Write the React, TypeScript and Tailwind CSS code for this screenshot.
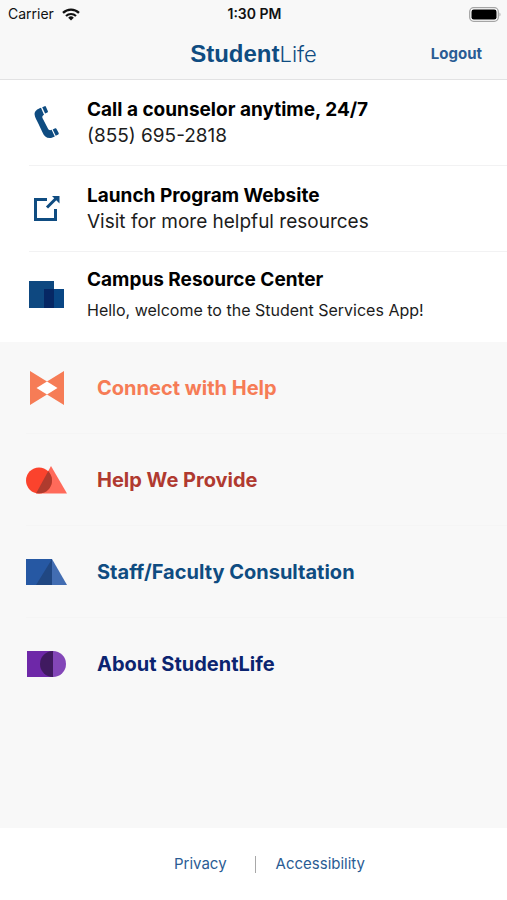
import type { ReactNode } from "react";

interface ResourceRowProps {
  title: string;
  detail: string;
  icon: ReactNode;
  detailClass: string;
}

interface MenuRowProps {
  label: string;
  icon: ReactNode;
  color: string;
}

const PhoneIcon = () => (
  <svg width="26" height="34" viewBox="0 0 26 34" fill="#0f4c81" aria-hidden="true">
    <path d="M7 1.800C3 3.200.4 5.200.6 8.500c.2 3 2.400 6 3.700 9l4 8.500c1.800 4 3.800 6 7.500 6 1.700 0 3.500-.8 5-1.600l-3.200-6.600c-1.700.8-2.900.3-3.700-1.200L8.600 12.300c-.7-1.600-.2-2.700 1.400-3.500z" />
    <path d="M8.200 1.300l2.500-1.100c.6-.2 1 0 1.200.5l2 4.600c.2.600 0 1-.5 1.200l-2.300 1.100z" />
    <path d="M18.700 23.400l2.500-1.100c.6-.2 1 0 1.200.5l2.300 4.300c.2.600.1 1-.4 1.300l-2.600 1.400z" />
  </svg>
);

const LaunchIcon = () => (
  <svg width="26" height="28" viewBox="0 0 26 28" fill="none" stroke="#0f4c81" aria-hidden="true">
    <path d="M13 4.500H1.500v20h20V14" strokeWidth="3" />
    <path d="M13 12.500L22.500 3" strokeWidth="3" />
    <path d="M18 1H25.500v7.500z" fill="#0f4c81" stroke="none" />
  </svg>
);

const CampusIcon = () => (
  <svg width="35" height="28" viewBox="0 0 35 28" aria-hidden="true">
    <path fill="#0e4880" d="M0 0h25v27H0z" />
    <path fill="#094684" d="M15 8h20v19H15z" />
    <path fill="#062764" d="M15 8h10v19H15z" />
  </svg>
);

const ConnectIcon = () => (
  <svg width="34" height="34" viewBox="0 0 34 34" aria-hidden="true">
    <path fill="#f67c56" d="M0 0l17 10.500L34 0v34L17 23.500 0 34z" />
    <path fill="#ffffff" d="M6.500 17L17 10.500 27.500 17 17 23.500z" />
  </svg>
);

const HelpIcon = () => (
  <svg width="41" height="28" viewBox="0 0 41 28" aria-hidden="true">
    <defs>
      <clipPath id="help-circle">
        <circle cx="13" cy="14.500" r="13" />
      </clipPath>
    </defs>
    <path fill="#ff6a5a" d="M25 0l16 27.500H10z" />
    <circle cx="13" cy="14.500" r="13" fill="#fb432d" />
    <path fill="#af3b2e" d="M25 0l16 27.500H10z" clipPath="url(#help-circle)" />
  </svg>
);

const StaffIcon = () => (
  <svg width="41" height="26" viewBox="0 0 41 26" aria-hidden="true">
    <path fill="#2658a3" d="M0 0h26v26H0z" />
    <path fill="#426db2" d="M26 0l15 26H26z" />
    <path fill="#204782" d="M26 0v26H10z" />
  </svg>
);

const AboutIcon = () => (
  <svg width="41" height="26" viewBox="0 0 41 26" aria-hidden="true">
    <path fill="#6e28a8" d="M1 0h27v26H1z" />
    <path fill="#8346b8" d="M27 0a13 13 0 0 1 0 26z" />
    <path fill="#401a60" d="M27 0a13 13 0 0 0 0 26z" />
  </svg>
);

const WifiIcon = () => (
  <svg width="18" height="13" viewBox="0 0 18 13" fill="none" stroke="#111111" aria-hidden="true">
    <path d="M1 4.800a11.500 11.500 0 0 1 16 0" strokeWidth="2.300" />
    <path d="M4 8a7.200 7.200 0 0 1 10 0" strokeWidth="2.200" />
    <path d="M9 12.500L6.200 9.700a4 4 0 0 1 5.600 0z" fill="#111111" stroke="none" />
  </svg>
);

const BatteryIcon = () => (
  <svg width="32" height="15" viewBox="0 0 32 15" aria-hidden="true">
    <rect x=".7" y=".7" width="28.600" height="13.600" rx="4" fill="#ffffff" stroke="#a5a5a5" strokeWidth="1.300" />
    <rect x="2.500" y="2.500" width="25" height="10" rx="2.200" fill="#000000" />
    <path d="M30.500 5.500c1.300.5 1.300 3.500 0 4z" fill="#a5a5a5" />
  </svg>
);

const ResourceRow = ({ title, detail, icon, detailClass }: ResourceRowProps) => (
  <li className="ml-[29px] h-[86px] not-last:border-b not-last:border-[#f2f2f3]">
    <button className="flex h-full w-full items-center gap-[23px] text-left">
      <span className="flex w-[35px] shrink-0 justify-center">{icon}</span>
      <span className="block">
        <span className="block text-[19px] leading-[26px] font-bold text-black">{title}</span>
        <span className={detailClass}>{detail}</span>
      </span>
    </button>
  </li>
);

const MenuRow = ({ label, icon, color }: MenuRowProps) => (
  <li className="ml-[26px] h-[92px] not-last:border-b not-last:border-[#f5f5f5]">
    <button className="flex h-full w-full items-center gap-[30px] text-left">
      <span className="flex w-[41px] shrink-0 justify-center">{icon}</span>
      <span className={`text-xl leading-7 font-bold ${color}`}>{label}</span>
    </button>
  </li>
);

export default function App() {
  return (
    <div className="flex min-h-screen flex-col bg-[#f8f8f8] font-[Inter,sans-serif]">
      {/* === Status bar and title === */}
      <header className="border-b border-[#e2e2e3]">
        <div className="grid h-7 grid-cols-3 items-center pr-1.5 pl-2 text-sm text-[#111111]">
          <span className="flex items-center gap-2">
            Carrier <WifiIcon />
          </span>
          <span className="text-center font-semibold">1:30 PM</span>
          <span className="flex justify-end">
            <BatteryIcon />
          </span>
        </div>
        <div className="grid h-[51px] grid-cols-[1fr_auto_1fr] items-center px-[25px]">
          <h1 className="col-start-2 flex items-baseline leading-7 text-[#0f4c81]">
            <span className="font-['Liberation_Sans',sans-serif] text-2xl leading-7 font-bold">Student</span>
            <span className="text-[22px] leading-7 font-light">Life</span>
          </h1>
          <button className="justify-self-end text-[15px] leading-5 font-bold text-[#2a5c94]">
            Logout
          </button>
        </div>
      </header>

      <main className="grow">
        <ul className="bg-white pb-1">
          <ResourceRow
            title="Call a counselor anytime, 24/7"
            detail="(855) 695-2818"
            icon={<PhoneIcon />}
            detailClass="block text-[19px] leading-[26px] text-[#1c1c1c]"
          />
          <ResourceRow
            title="Launch Program Website"
            detail="Visit for more helpful resources"
            icon={<LaunchIcon />}
            detailClass="block text-[19px] leading-[26px] text-[#1c1c1c]"
          />
          <ResourceRow
            title="Campus Resource Center"
            detail="Hello, welcome to the Student Services App!"
            icon={<CampusIcon />}
            detailClass="block pt-1 text-base leading-[26px] text-[#1c1c1c]"
          />
        </ul>

        <ul>
          <MenuRow label="Connect with Help" icon={<ConnectIcon />} color="text-[#f67c56]" />
          <MenuRow label="Help We Provide" icon={<HelpIcon />} color="text-[#b03a30]" />
          <MenuRow label="Staff/Faculty Consultation" icon={<StaffIcon />} color="text-[#0f4c81]" />
          <MenuRow label="About StudentLife" icon={<AboutIcon />} color="text-[#0b2470]" />
        </ul>
      </main>

      <footer className="flex h-[72px] items-center justify-center bg-white pl-8 text-[15px] leading-5 text-[#2a5c94]">
        <a href="#privacy">Privacy</a>
        <span className="mr-5 ml-7 h-[17px] w-px bg-[#a8a8a8]" />
        <a href="#accessibility">Accessibility</a>
      </footer>
    </div>
  );
}
